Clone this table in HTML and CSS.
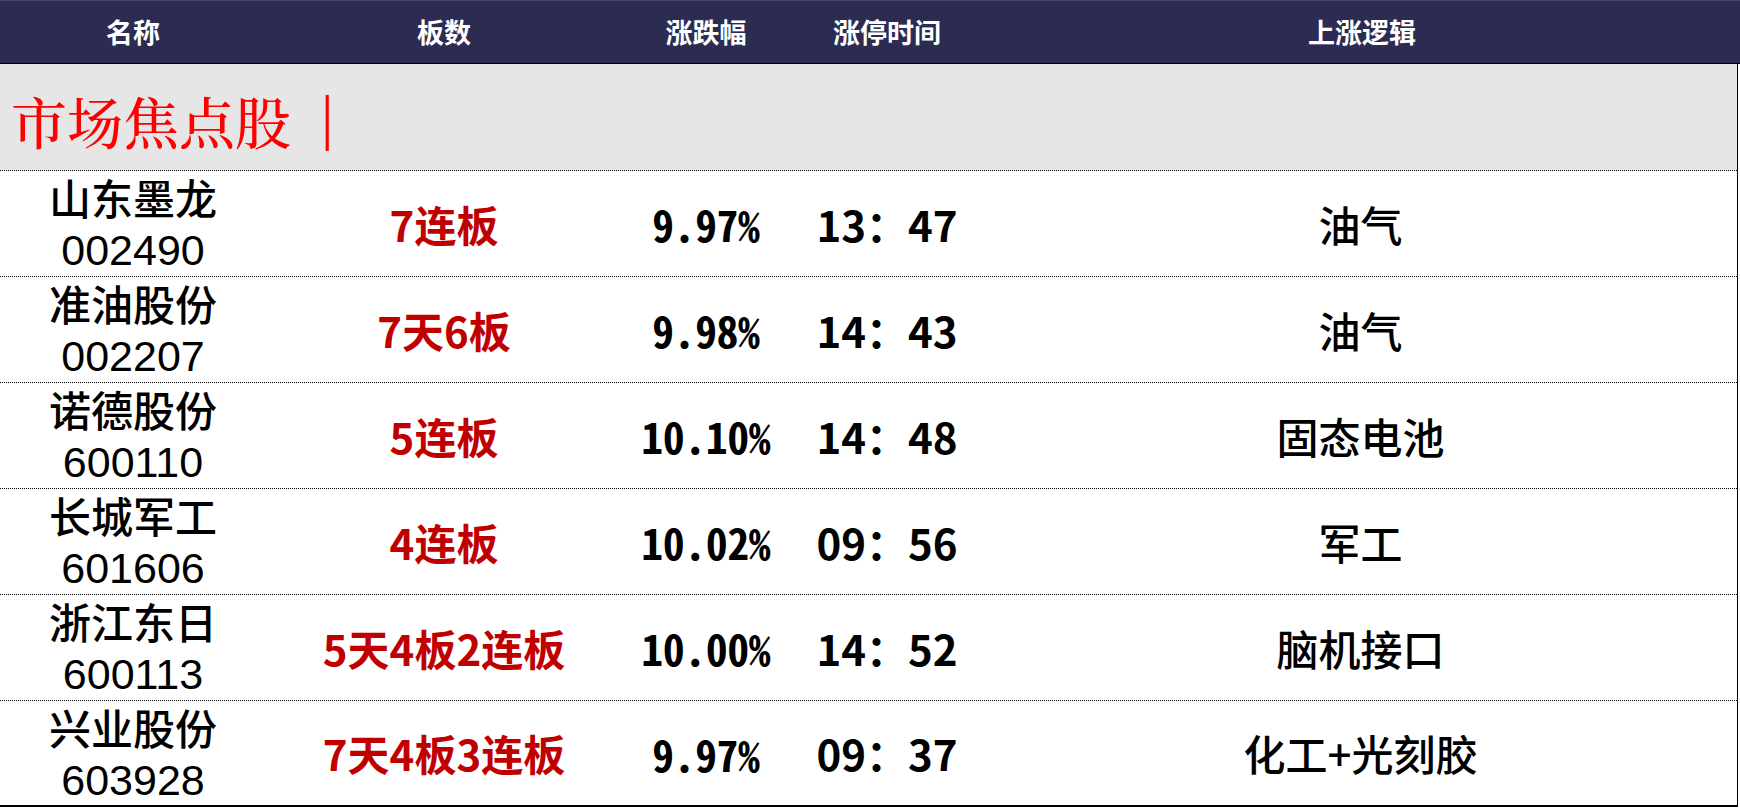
FILE: index.html
```html
<!DOCTYPE html>
<html lang="zh-CN">
<head>
<meta charset="utf-8">
<title>市场焦点股</title>
<link rel="stylesheet" href="styles.css">
</head>
<body>
<div class="sheet">
  <div class="head">
    <div class="hc">名称</div>
    <div class="hc">板数</div>
    <div class="hc">涨跌幅</div>
    <div class="hc">涨停时间</div>
    <div class="hc">上涨逻辑</div>
  </div>
  <div class="section">
    <span class="title">市场焦点股</span><span class="bar">|</span>
  </div>
  <div class="body">
    <div class="row">
      <div class="c name"><span class="cn">山东墨龙</span><span class="code">002490</span></div>
      <div class="c board">7连板</div>
      <div class="c pct">9.97%</div>
      <div class="c time">13：47</div>
      <div class="c logic">油气</div>
    </div>
    <div class="row">
      <div class="c name"><span class="cn">准油股份</span><span class="code">002207</span></div>
      <div class="c board">7天6板</div>
      <div class="c pct">9.98%</div>
      <div class="c time">14：43</div>
      <div class="c logic">油气</div>
    </div>
    <div class="row">
      <div class="c name"><span class="cn">诺德股份</span><span class="code">600110</span></div>
      <div class="c board">5连板</div>
      <div class="c pct">10.10%</div>
      <div class="c time">14：48</div>
      <div class="c logic">固态电池</div>
    </div>
    <div class="row">
      <div class="c name"><span class="cn">长城军工</span><span class="code">601606</span></div>
      <div class="c board">4连板</div>
      <div class="c pct">10.02%</div>
      <div class="c time">09：56</div>
      <div class="c logic">军工</div>
    </div>
    <div class="row">
      <div class="c name"><span class="cn">浙江东日</span><span class="code">600113</span></div>
      <div class="c board">5天4板2连板</div>
      <div class="c pct">10.00%</div>
      <div class="c time">14：52</div>
      <div class="c logic">脑机接口</div>
    </div>
    <div class="row last">
      <div class="c name"><span class="cn">兴业股份</span><span class="code">603928</span></div>
      <div class="c board">7天4板3连板</div>
      <div class="c pct">9.97%</div>
      <div class="c time">09：37</div>
      <div class="c logic">化工+光刻胶</div>
    </div>
  </div>
</div>
</body>
</html>
```
FILE: styles.css
```css
* { box-sizing: border-box; }
html, body { margin: 0; padding: 0; background: #ffffff; }
body { font-family: "Noto Sans CJK SC", "Liberation Sans", sans-serif; color: #000; }

.sheet { width: 1740px; }

.head {
  display: grid;
  grid-template-columns: 266px 356px 168px 194px 756px;
  height: 64px;
  background: #2c2c53;
  border-top: 1px solid #45456a;
  border-bottom: 1px solid #000;
}
.hc {
  color: #fff;
  font-size: 27px;
  font-weight: 700;
  display: flex;
  align-items: center;
  justify-content: center;
  padding-bottom: 2px;
}

.section {
  width: 1738px;
  height: 106px;
  background: #e6e6e6;
  border-right: 1px solid #000;
  display: flex;
  align-items: center;
  padding: 6px 0 0 11px;
  color: #ff0000;
}
.title {
  font-family: "Noto Serif CJK SC", "Liberation Serif", serif;
  font-size: 56px;
  font-weight: 500;
  line-height: 1;
}
.bar {
  font-family: "Liberation Serif", serif;
  font-size: 62px;
  line-height: 1;
  margin-left: 30px;
  margin-top: -6px;
}

.body { width: 1738px; border-right: 1px solid #000; }

.row {
  display: grid;
  grid-template-columns: 266px 356px 168px 194px 753px;
  height: 106px;
  border-top: 1px dotted #000;
}
.row.last { height: 107px; border-bottom: 2px solid #000; }

.c {
  display: flex;
  align-items: center;
  justify-content: center;
  padding-top: 0;
  font-size: 42px;
  line-height: 1;
  white-space: nowrap;
}
.name {
  flex-direction: column;
  justify-content: flex-start;
  gap: 11px;
  padding-top: 5px;
  font-weight: 500;
}
.code {
  font-family: "Liberation Sans", "Noto Sans CJK SC", sans-serif;
  font-size: 43px;
  font-weight: 400;
}
.board { color: #c00000; font-weight: 700; }
.pct {
  font-family: "Noto Sans Mono CJK SC", "Noto Sans CJK SC", sans-serif;
  font-weight: 700;
  font-size: 43px;
}
.time { font-weight: 700; }
.logic { font-weight: 500; }
```
